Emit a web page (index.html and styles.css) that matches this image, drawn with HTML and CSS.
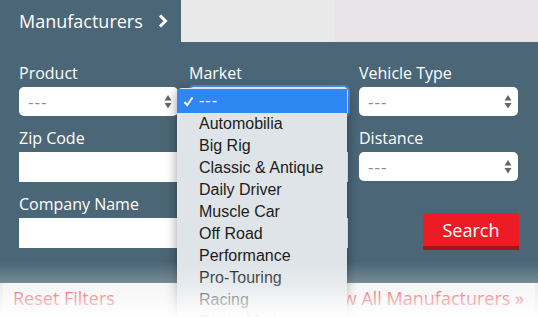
FILE: index.html
```html
<html>
<head>
<title>Manufacturers</title>
<link rel="stylesheet" href="styles.css">
</head>
<body>

<div class="tabbar">
  <div class="tab">
    Manufacturers
    <svg class="chev" width="10" height="14" viewBox="0 0 10 14"><polyline points="2,1.5 7.5,7 2,12.5" fill="none" stroke="#fff" stroke-width="3"/></svg>
  </div>
  <div class="tab-gap"></div>
  <div class="tab-rest"></div>
</div>

<div class="panel">
  <div class="grid">
    <div class="field">
      <label>Product</label>
      <div class="select"><span>---</span><svg width="8" height="14" viewBox="0 0 8 14"><polygon points="4,0 7.5,5.5 0.5,5.5" fill="#666"/><polygon points="0.5,8 7.5,8 4,13.5" fill="#666"/></svg></div>
    </div>
    <div class="field">
      <label>Market</label>
      <div class="select focused"></div>
    </div>
    <div class="field">
      <label>Vehicle Type</label>
      <div class="select"><span>---</span><svg width="8" height="14" viewBox="0 0 8 14"><polygon points="4,0 7.5,5.5 0.5,5.5" fill="#666"/><polygon points="0.5,8 7.5,8 4,13.5" fill="#666"/></svg></div>
    </div>

    <div class="field wide">
      <label>Zip Code</label>
      <div class="input"></div>
    </div>
    <div class="field">
      <label>Distance</label>
      <div class="select"><span>---</span><svg width="8" height="14" viewBox="0 0 8 14"><polygon points="4,0 7.5,5.5 0.5,5.5" fill="#666"/><polygon points="0.5,8 7.5,8 4,13.5" fill="#666"/></svg></div>
    </div>

    <div class="field wide">
      <label>Company Name</label>
      <div class="input"></div>
    </div>
    <div class="field btn-cell">
      <button class="search">Search</button>
    </div>
  </div>
</div>

<div class="footer">
  <a href="#">Reset Filters</a>
  <a href="#">View All Manufacturers &raquo;</a>
</div>

<!-- open Market menu -->
<div class="menu">
  <div class="item sel"><svg class="check" width="11" height="11" viewBox="0 0 11 11"><path d="M1.5 6 L4.2 9.2 L9.5 1.5" fill="none" stroke="#fff" stroke-width="2"/></svg><span>---</span></div>
  <div class="item">Automobilia</div>
  <div class="item">Big Rig</div>
  <div class="item">Classic &amp; Antique</div>
  <div class="item">Daily Driver</div>
  <div class="item">Muscle Car</div>
  <div class="item">Off Road</div>
  <div class="item">Performance</div>
  <div class="item">Pro-Touring</div>
  <div class="item">Racing</div>
  <div class="item">Resto-Mod</div>
</div>

<div class="fade"></div>

</body>
</html>
```

FILE: styles.css
```css
body {
  margin: 0;
  background-color: #e8e6e8;
  font-family: "Open Sans", sans-serif;
  overflow: hidden;
}
.tabbar {
  display: flex;
  height: 42px;
}
.tab {
  width: 162px;
  background-color: #4b6676;
  color: #fff;
  font-size: 18px;
  padding-left: 19px;
  display: flex;
  align-items: center;
  gap: 15px;
}
.tab-gap {
  width: 154px;
  background-color: #e9e9e9;
}
.tab-rest {
  flex: 1;
  background-color: #e8e4e8;
}
.panel {
  background-color: #4b6676;
  padding: 20px 0 35px 19px;
}
.grid {
  display: grid;
  grid-template-columns: 159px 159px 159px;
  column-gap: 11px;
  row-gap: 11px;
}
.field {
  display: flex;
  flex-direction: column;
}
.wide {
  grid-column: span 2;
}
label {
  color: #fff;
  font-size: 16px;
  line-height: 22px;
  margin-bottom: 3px;
}
.select {
  height: 29px;
  background-color: #fff;
  border-radius: 5px;
  display: flex;
  align-items: center;
  justify-content: space-between;
  padding: 0 6px 0 9px;
  color: #8c8c8c;
  font-size: 17px;
  letter-spacing: 1px;
  box-sizing: border-box;
}
.focused {
  box-shadow: 0 0 0 2px #4a90e8;
}
.input {
  height: 30px;
  background-color: #fff;
}
.btn-cell {
  justify-content: flex-end;
  align-items: flex-end;
}
.search {
  width: 96px;
  height: 37px;
  margin-bottom: -2px;
  margin-right: -1px;
  background-color: #ec1b24;
  border: 0;
  border-bottom: 4px solid #a6131b;
  color: #fff;
  font-family: "Open Sans", sans-serif;
  font-size: 18px;
  padding: 0;
}
.footer {
  margin: 0 3px;
  height: 40px;
  background-color: #f2f2f2;
  display: flex;
  justify-content: space-between;
  align-items: flex-start;
  padding: 3px 11px 0 10px;
}
.footer a {
  color: #ed1c24;
  text-decoration: none;
  font-size: 18px;
}
.menu {
  position: absolute;
  left: 177px;
  top: 88px;
  width: 170px;
  padding-top: 1px;
  background-color: #dfe4e8;
  border-radius: 5px;
  box-shadow: 0 3px 12px rgba(0, 0, 0, 0.4);
  font-family: "Liberation Sans", sans-serif;
  font-size: 16px;
  color: #1c1c1c;
}
.item {
  height: 22px;
  line-height: 22px;
  padding-left: 22px;
  display: flex;
  align-items: center;
  gap: 5px;
}
.sel {
  height: 24px;
  padding-left: 6px;
  background-color: #2e87f3;
  color: #fff;
  letter-spacing: 1px;
}
.fade {
  position: absolute;
  left: 0;
  right: 0;
  top: 262px;
  height: 55px;
  background: linear-gradient(to bottom, rgba(255,255,255,0) 0, rgba(255,255,255,0.25) 22px, rgba(255,255,255,0.62) 38px, rgba(255,255,255,0.97) 100%);
}
```
